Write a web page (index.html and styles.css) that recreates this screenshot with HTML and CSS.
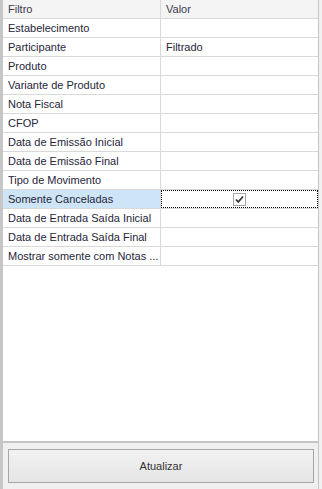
FILE: index.html
```html
<!DOCTYPE html>
<html lang="pt">
<head>
  <meta charset="UTF-8">
  <meta name="viewport" content="width=device-width, initial-scale=1.0">
  <title>Filtros</title>
  <link rel="stylesheet" href="styles.css">
</head>
<body>
  <div class="panel">
    <div class="grid">
      <div class="row head">
        <div class="cell name">Filtro</div>
        <div class="cell value">Valor</div>
      </div>
      <div class="row"><div class="cell name">Estabelecimento</div><div class="cell value"></div></div>
      <div class="row"><div class="cell name">Participante</div><div class="cell value">Filtrado</div></div>
      <div class="row"><div class="cell name">Produto</div><div class="cell value"></div></div>
      <div class="row"><div class="cell name">Variante de Produto</div><div class="cell value"></div></div>
      <div class="row"><div class="cell name">Nota Fiscal</div><div class="cell value"></div></div>
      <div class="row"><div class="cell name">CFOP</div><div class="cell value"></div></div>
      <div class="row"><div class="cell name">Data de Emissão Inicial</div><div class="cell value"></div></div>
      <div class="row"><div class="cell name">Data de Emissão Final</div><div class="cell value"></div></div>
      <div class="row"><div class="cell name">Tipo de Movimento</div><div class="cell value"></div></div>
      <div class="row selected">
        <div class="cell name">Somente Canceladas</div>
        <div class="cell value focus">
          <svg class="check" width="13" height="13" viewBox="0 0 13 13">
            <rect x="0.5" y="0.5" width="12" height="12" fill="#fff" stroke="#a8a8a8"/>
            <path d="M3 6.5 L5.3 9 L10 3.5" fill="none" stroke="#333" stroke-width="1.8"/>
          </svg>
        </div>
      </div>
      <div class="row"><div class="cell name">Data de Entrada Saída Inicial</div><div class="cell value"></div></div>
      <div class="row"><div class="cell name">Data de Entrada Saída Final</div><div class="cell value"></div></div>
      <div class="row"><div class="cell name">Mostrar somente com Notas ...</div><div class="cell value"></div></div>
    </div>
    <div class="footer">
      <button class="btn">Atualizar</button>
    </div>
  </div>
</body>
</html>
```

FILE: styles.css
```css
body {
  margin: 0;
  background: #f0f0f0;
  font-family: "Liberation Sans", Arial, sans-serif;
  font-size: 11px;
}

.panel {
  display: flex;
  flex-direction: column;
  width: 315px;
  height: 489px;
  border-left: 3px solid #c6c6c6;
  border-right: 1px solid #c6c6c6;
  margin-right: 3px;
  background: #f0f0f0;
}

.grid {
  flex: 1;
  background: #fff;
  border-bottom: 2px solid #c4c4c4;
}

.row {
  display: flex;
  height: 18px;
  border-bottom: 1px solid #d9d9d9;
}

.cell {
  line-height: 18px;
  padding-left: 5px;
  color: #26263a;
  white-space: nowrap;
  overflow: hidden;
}

.name {
  width: 152px;
  border-right: 1px solid #d9d9d9;
}

.value {
  flex: 1;
}

.head {
  background: #f4f4f4;
}

.head .cell {
  color: #3a3a4a;
}

.selected .name {
  background: #cde5f7;
}

.focus {
  display: flex;
  justify-content: center;
  align-items: center;
  padding-left: 0;
  outline: 1px dotted #000;
  outline-offset: -1px;
}

.check {
  display: block;
}

.footer {
  height: 46px;
  padding: 6px 4px 6px 5px;
  box-sizing: border-box;
}

.btn {
  display: block;
  width: 100%;
  height: 34px;
  border: 1px solid #a6a6a6;
  background: linear-gradient(#f2f2f2, #e5e5e5);
  font-family: "Liberation Sans", Arial, sans-serif;
  font-size: 11px;
  color: #333;
}
```
